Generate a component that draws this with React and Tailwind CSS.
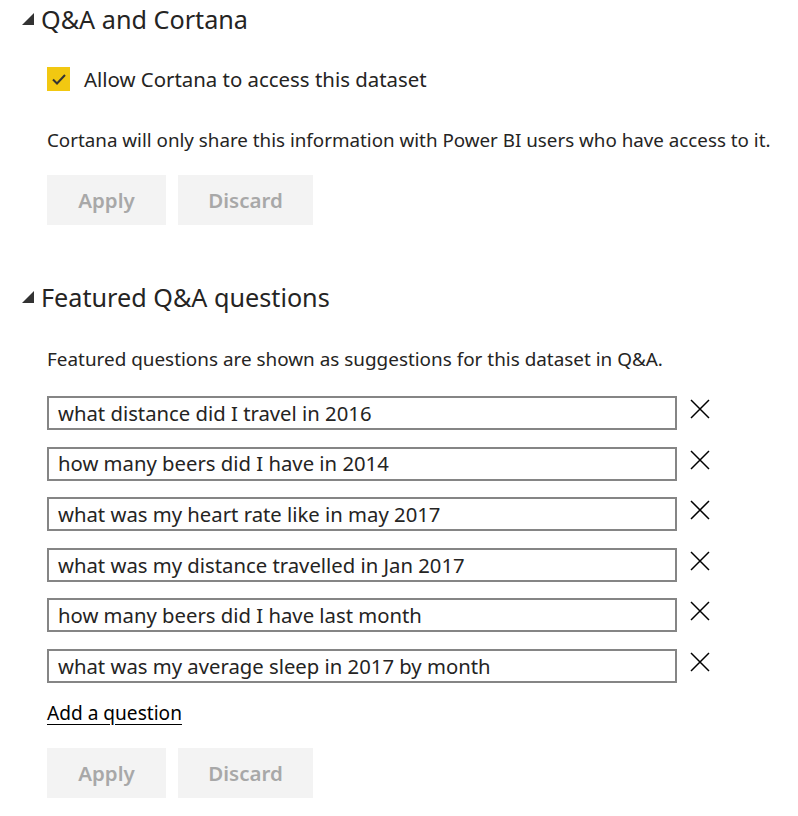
import React from "react";

const font = { fontFamily: '"Noto Sans", "Open Sans", sans-serif' };

function Tri() {
  return (
    <svg width="12" height="12" viewBox="0 0 12 12" className="shrink-0">
      <polygon points="0,12 12,12 12,0" fill="#333333" />
    </svg>
  );
}

function XIcon() {
  return (
    <svg width="20" height="20" viewBox="0 0 20 20" className="shrink-0">
      <path d="M1 1 L19 19 M19 1 L1 19" stroke="#000" strokeWidth="1.5" fill="none" />
    </svg>
  );
}

function Buttons() {
  return (
    <div className="flex gap-[12px] pl-[47px]">
      <button className="w-[119px] h-[50px] bg-[#f3f3f3] text-[#a8a8a8] text-[20.5px] font-semibold">Apply</button>
      <button className="w-[135px] h-[50px] bg-[#f3f3f3] text-[#a8a8a8] text-[20.5px] font-semibold">Discard</button>
    </div>
  );
}

const questions = [
  "what distance did I travel in 2016",
  "how many beers did I have in 2014",
  "what was my heart rate like in may 2017",
  "what was my distance travelled in Jan 2017",
  "how many beers did I have last month",
  "what was my average sleep in 2017 by month",
];

export default function App() {
  return (
    <div className="w-[798px] h-[816px] bg-white text-[#252423] pt-[4px]" style={font}>
      <div className="flex items-center h-[32px] pl-[22px] gap-[7px]">
        <div className="-mt-[2px]"><Tri /></div>
        <span className="text-[25.2px]">Q&amp;A and Cortana</span>
      </div>
      <div className="flex items-center h-[24px] mt-[31px] pl-[47px] gap-[14px]">
        <div className="w-[23px] h-[24px] bg-[#f2c811] flex items-center justify-center">
          <svg width="14" height="11" viewBox="0 0 14 11">
            <path d="M1 5.5 L5 9.5 L13 1" stroke="#333" strokeWidth="2" fill="none" />
          </svg>
        </div>
        <span className="text-[20.4px]">Allow Cortana to access this dataset</span>
      </div>
      <p className="mt-[37px] pl-[47px] text-[18.8px] leading-[24px]">
        Cortana will only share this information with Power BI users who have access to it.
      </p>
      <div className="mt-[23px]">
        <Buttons />
      </div>
      <div className="flex items-center h-[32px] pl-[22px] gap-[7px] mt-[57px]">
        <div className="-mt-[2px]"><Tri /></div>
        <span className="text-[25.2px]">Featured Q&amp;A questions</span>
      </div>
      <p className="mt-[33px] pl-[47px] text-[18.9px] leading-[24px]">
        Featured questions are shown as suggestions for this dataset in Q&amp;A.
      </p>
      <div className="mt-[25px] pl-[47px] flex flex-col gap-[16.6px]">
        {questions.map((q) => (
          <div key={q} className="flex items-center gap-[13px]">
            <div className="w-[630px] h-[34px] border-2 border-[#858585] flex items-center pl-[9px] text-[20.3px]">
              {q}
            </div>
            <div className="-mt-[8px]">
              <XIcon />
            </div>
          </div>
        ))}
      </div>
      <div className="mt-[18px] pl-[47px] h-[24px] flex items-center">
        <span className="text-[19.1px] text-black underline underline-offset-[4px]">Add a question</span>
      </div>
      <div className="mt-[23px]">
        <Buttons />
      </div>
    </div>
  );
}
